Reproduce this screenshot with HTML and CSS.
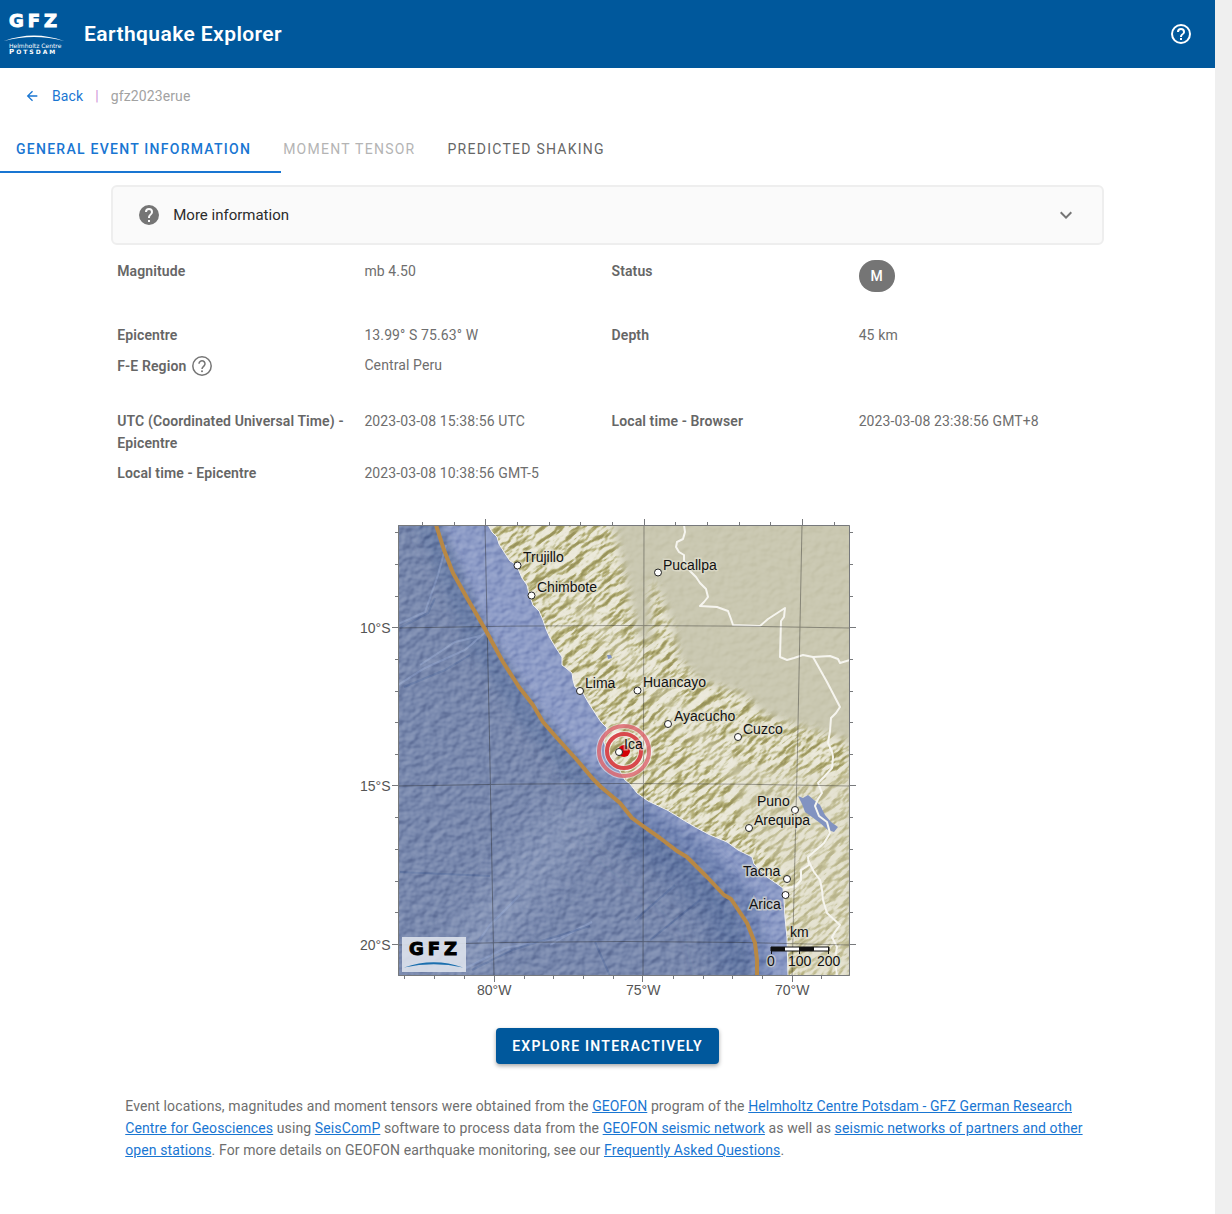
FILE: index.html
```html
<!DOCTYPE html>
<html lang="en">
<head>
<meta charset="utf-8">
<meta name="viewport" content="width=device-width, initial-scale=1">
<title>Earthquake Explorer</title>
<link rel="stylesheet" href="styles.css">
</head>
<body>
<div class="app">
  <header class="app-bar">
    <svg class="logo" viewBox="0 0 68 68" role="img" aria-label="GFZ Helmholtz Centre Potsdam">
      <text class="logo-name" x="9" y="27">GFZ</text>
      <path d="M4 41Q34 30 64 41Q34 33 4 41Z" fill="#fff"/>
      <text class="logo-centre" x="9" y="48">Helmholtz Centre</text>
      <text class="logo-city" x="9" y="54"><tspan class="logo-cap">P</tspan>OTSDAM</text>
    </svg>
    <h1 class="app-title">Earthquake Explorer</h1>
    <button class="icon-button" type="button" aria-label="Help">
      <svg class="icon" viewBox="0 0 24 24"><path d="M11 18h2v-2h-2v2zm1-16a10 10 0 1 0 0 20 10 10 0 0 0 0-20zm0 18a8 8 0 1 1 0-16 8 8 0 0 1 0 16zm0-14a4 4 0 0 0-4 4h2a2 2 0 1 1 4 0c0 2-3 1.750-3 5h2c0-2.250 3-2.500 3-5a4 4 0 0 0-4-4z"/></svg>
    </button>
  </header>

  <nav class="crumbs" aria-label="Breadcrumb">
    <a class="back" href="#">
      <svg class="back-icon" viewBox="0 0 24 24"><path d="M20 11v2H8l5.500 5.500-1.420 1.420L4.160 12l7.920-7.920L13.500 5.500 8 11h12z"/></svg>
      Back
    </a>
    <span class="divider">|</span>
    <span class="event-id">gfz2023erue</span>
  </nav>

  <div class="tabs" role="tablist">
    <button class="tab tab-active" type="button" role="tab" aria-selected="true">General event information</button>
    <button class="tab" type="button" role="tab" disabled>Moment tensor</button>
    <button class="tab" type="button" role="tab">Predicted shaking</button>
  </div>

  <main class="page">
    <div class="content">
      <button class="more-info" type="button" aria-expanded="false">
        <svg class="icon icon-grey" viewBox="0 0 24 24"><path d="M15.070 11.250l-.900.920C13.450 12.890 13 13.500 13 15h-2v-.500c0-1.110.450-2.110 1.170-2.830l1.240-1.260c.370-.360.590-.860.590-1.410a2 2 0 0 0-4 0H8a4 4 0 0 1 8 0c0 .880-.360 1.670-.930 2.250M13 19h-2v-2h2M12 2a10 10 0 1 0 0 20 10 10 0 0 0 0-20z"/></svg>
        <span class="more-label">More information</span>
        <svg class="chevron" viewBox="0 0 24 24"><path d="M7.410 8.580 12 13.170l4.590-4.590L18 10l-6 6-6-6 1.410-1.420z"/></svg>
      </button>

      <section class="details">
        <dl class="group">
          <dt>Magnitude</dt><dd>mb 4.50</dd>
          <dt>Status</dt><dd><span class="chip">M</span></dd>
        </dl>
        <dl class="group">
          <dt>Epicentre</dt><dd>13.99° S 75.63° W</dd>
          <dt>Depth</dt><dd>45 km</dd>
          <dt class="with-icon">F-E Region
            <svg class="icon icon-grey" viewBox="0 0 24 24"><circle cx="12" cy="12" r="9.200" fill="none" stroke="currentColor" stroke-width="1.500"/><path d="M9 9.800a3 3 0 1 1 5.100 2.100C13 13 12 13.300 12 15" fill="none" stroke="currentColor" stroke-width="1.500"/><circle cx="12" cy="17.200" r="1"/></svg>
          </dt><dd>Central Peru</dd>
        </dl>
        <dl class="group">
          <dt>UTC (Coordinated Universal Time) - Epicentre</dt><dd>2023-03-08 15:38:56 UTC</dd>
          <dt>Local time - Browser</dt><dd>2023-03-08 23:38:56 GMT+8</dd>
          <dt>Local time - Epicentre</dt><dd>2023-03-08 10:38:56 GMT-5</dd>
        </dl>
      </section>

      <svg class="map" viewBox="352 515 511 490" role="img" aria-label="Map of the epicentre near Ica, Peru">
        <defs>
          <clipPath id="frame"><path d="M398 525H850V976H398Z"/></clipPath>
          <path id="coast" d="M488 525L492 532L497 537L499 544L504 552L510 561L517 565L519 571L522 578L527 585L529 594L533 605L539 611L543 620L546 629L550 638L556 648L562 657L562 665L566 668L572 673L573 680L575 687L583 693L588 702L595 713L601 722L607 728L604 741L607 752L616 764L625 780L630 784L637 793L648 801L667 810L680 818L695 827L710 835L727 842L738 850L752 857L754 864L767 877L783 888L784 900L785 918L787 937L788 976"/>
          <path id="land-shape" d="M488 525L492 532L497 537L499 544L504 552L510 561L517 565L519 571L522 578L527 585L529 594L533 605L539 611L543 620L546 629L550 638L556 648L562 657L562 665L566 668L572 673L573 680L575 687L583 693L588 702L595 713L601 722L607 728L604 741L607 752L616 764L625 780L630 784L637 793L648 801L667 810L680 818L695 827L710 835L727 842L738 850L752 857L754 864L767 877L783 888L784 900L785 918L787 937L788 976H850V525Z"/>
          <clipPath id="land"><use href="#land-shape"/></clipPath>
          <filter id="soft" x="-20%" y="-20%" width="140%" height="140%"><feGaussianBlur stdDeviation="14"/></filter>
          <filter id="edge" x="-20%" y="-20%" width="140%" height="140%"><feGaussianBlur stdDeviation="5"/></filter>
          <filter id="mountains" x="0" y="0" width="100%" height="100%" color-interpolation-filters="sRGB">
            <feTurbulence type="fractalNoise" baseFrequency=".055 .14" numOctaves="4" seed="12"/>
            <feColorMatrix values="0 0 0 0 0 0 0 0 0 0 0 0 0 0 0 1.400 0 0 0 -.200"/>
            <feDiffuseLighting surfaceScale="5" lighting-color="#fff"><feDistantLight azimuth="265" elevation="48"/></feDiffuseLighting>
            <feComponentTransfer>
              <feFuncR type="table" tableValues=".600 .680 .730 .800 .890 .930"/>
              <feFuncG type="table" tableValues=".580 .660 .710 .790 .880 .920"/>
              <feFuncB type="table" tableValues=".360 .440 .510 .650 .790 .870"/>
            </feComponentTransfer>
          </filter>
          <filter id="seabed" x="0" y="0" width="100%" height="100%" color-interpolation-filters="sRGB">
            <feTurbulence type="fractalNoise" baseFrequency=".11 .13" numOctaves="2" seed="5"/>
            <feColorMatrix values="0 0 0 0 0 0 0 0 0 0 0 0 0 0 0 1 0 0 0 0"/>
            <feDiffuseLighting surfaceScale="2" lighting-color="#fff"><feDistantLight azimuth="225" elevation="34"/></feDiffuseLighting>
          </filter>
          <mask id="ranges">
            <path d="M470 500H605L618 545L628 590L638 635L652 645L650 580L656 585L672 625L680 660L700 680L745 695L765 715L850 742V1000H470Z" fill="#fff" filter="url(#edge)"/>
          </mask>
        </defs>

        <g clip-path="url(#frame)">
          <rect x="398" y="525" width="452" height="451" fill="#7585ab"/>
          <path d="M434 515L485 629L533 705L593 779L632 818L687 857L731 898L757 980H800V880L640 770L560 640L490 515Z" fill="#8a99c5" filter="url(#edge)"/>
          <path d="M424 515L478 640L530 718L590 790" fill="none" stroke="#667aa4" stroke-width="22" filter="url(#edge)"/>
          <path d="M590 785L632 830L680 865L725 910L742 985" fill="none" stroke="#5c719f" stroke-width="36" filter="url(#soft)"/>
          <path d="M640 815L700 850L745 895L764 975" fill="none" stroke="#6a7eae" stroke-width="12" filter="url(#edge)"/>
          <path d="M455 970L560 830L620 800" fill="none" stroke="#8c9bbd" stroke-width="45" opacity=".6" filter="url(#soft)"/>
          <g fill="none" stroke="#8fa1ca" stroke-width="2" opacity=".6">
            <path d="M398 685L425 668L465 650L488 630M398 624L425 612L438 575L446 545M420 665L455 642L480 636"/>
            <path d="M466 968L505 948L560 938L592 922M478 942L490 925L520 895M550 945L580 928"/>
          </g>
          <g fill="none" stroke="#4b6397" stroke-width="2" opacity=".45">
            <path d="M404 687L445 670L470 655M400 628L428 613L435 598M400 872L490 876M472 970L512 950L590 926M595 942L610 976M635 920L675 885M650 940L700 900"/>
          </g>
          <rect class="relief-sea" x="398" y="525" width="452" height="451" filter="url(#seabed)"/>

          <g clip-path="url(#land)">
            <rect x="398" y="525" width="452" height="451" fill="#c9c7b0"/>
            <rect class="relief-plain" x="398" y="525" width="452" height="451" filter="url(#seabed)"/>
            <g mask="url(#ranges)">
              <rect x="294" y="420" width="660" height="660" transform="rotate(-38 624 750)" filter="url(#mountains)"/>
              <path d="M735 765L850 775V976H800L790 880L740 820Z" fill="#dedbc8" opacity=".45" filter="url(#edge)"/>
              <path d="M575 600L650 680L740 780" fill="none" stroke="#e9e7da" stroke-width="20" opacity=".35" filter="url(#edge)"/>
            </g>
          </g>
          <use href="#coast" fill="none" stroke="#f1f1ee" stroke-width="1"/>
          <path d="M798 796L803 798L808 795L814 800L820 805L825 815L831 822L838 827L834 832L828 830L820 823L812 817L805 812L802 804Z" fill="#8293c1"/>
          <path d="M607 655L611 655L612 658L608 659Z" fill="#8293c1"/>

          <g fill="none" stroke="#f6f5ef" stroke-width="2" stroke-linejoin="round">
            <path d="M684 525L685 532L683 539L677 542L676 547L679 552L684 555L684 561L690 571L696 577L700 583L706 589L708 597L704 602L700 606L717 607L728 611L731 619L733 625L760 626L768 619L785 608L784 617L781 621L780 657L787 660L794 658L803 655L813 657L830 656L838 659L840 663L850 660"/>
            <path d="M813 657L827 682L840 707L836 713L831 718L830 731L828 743L832 752L833 757L832 768L824 777L818 783L822 793L818 799L815 806L819 816L827 822L830 833L824 843L816 850L808 857L809 865L801 870L801 880L796 886L784 889"/>
            <path d="M808 860L814 872L820 880L822 890L823 900L827 913L840 925L835 932L832 937L837 947L835 959L837 976"/>
          </g>
          <g class="grid-lines">
            <path d="M485 525Q490 750 494 976M644 525L643 976M802 525Q798 750 792 976"/>
            <path d="M398 628Q624 623 850 628M398 786Q624 781 850 786M398 945Q624 938 850 945"/>
          </g>
          <path d="M436 525L444 550L453 573L467 598L485 629L503 662L519 687L533 705L543 722L557 738L577 760L593 779L601 787L620 803L632 818L643 826L660 838L677 851L687 857L707 877L724 895L731 899L747 923L755 943L757 960L757 976" fill="none" stroke="#b88845" stroke-width="4" stroke-linejoin="round"/>
        </g>
        <path d="M398.500 525.500H849.500V975.500H398.500Z" fill="none" stroke="#77797c"/>
        <path class="ticks" d="M398 532.500h-3M398 564.500h-3M398 596.500h-3M398 627.500h-6M398 659.500h-3M398 691.500h-3M398 722.500h-3M398 754.500h-3M398 785.500h-6M398 817.500h-3M398 849.500h-3M398 881.500h-3M398 912.500h-3M398 944.500h-6M850 532.500h3M850 564.500h3M850 596.500h3M850 627.500h6M850 659.500h3M850 691.500h3M850 722.500h3M850 754.500h3M850 785.500h6M850 817.500h3M850 849.500h3M850 881.500h3M850 912.500h3M850 944.500h6"/>
        <path class="ticks" d="M422.500 525v-3M454.500 525v-3M485.500 525v-6M517.500 525v-3M549.500 525v-3M580.500 525v-3M612.500 525v-3M644.500 525v-6M675.500 525v-3M707.500 525v-3M739.500 525v-3M770.500 525v-3M802.500 525v-6M834.500 525v-3M404.500 976v3M434.500 976v3M464.500 976v3M494.500 976v6M524.500 976v3M553.500 976v3M583.500 976v3M613.500 976v3M642.500 976v6M673.500 976v3M703.500 976v3M732.500 976v3M762.500 976v3M792.500 976v6M821.500 976v3"/>

        <g fill="none">
          <circle cx="624" cy="751" r="25" stroke="#fff" stroke-width="6" opacity=".5"/>
          <circle cx="624" cy="751" r="25" stroke="#d8565f" stroke-width="4" opacity=".75"/>
          <circle cx="624" cy="751" r="17" stroke="#fff" stroke-width="6" opacity=".6"/>
          <circle cx="624" cy="751" r="17" stroke="#d8484c" stroke-width="4"/>
        </g>
        <circle cx="624" cy="751" r="6" fill="#d40006"/>

        <g class="city-dots">
          <circle cx="517.500" cy="565.500" r="3.500"/><circle cx="531.500" cy="595.500" r="3.500"/><circle cx="658" cy="572.500" r="3.500"/><circle cx="580" cy="691" r="3.500"/><circle cx="637.500" cy="690.500" r="3.500"/><circle cx="668" cy="724" r="3.500"/><circle cx="738" cy="737" r="3.500"/><circle cx="619" cy="752" r="3.500"/><circle cx="795" cy="810" r="3.500"/><circle cx="749" cy="828" r="3.500"/><circle cx="787" cy="879" r="3.500"/><circle cx="785.500" cy="895" r="3.500"/>
        </g>
        <g class="city-names">
          <text x="523" y="562">Trujillo</text><text x="537" y="592">Chimbote</text><text x="663" y="570">Pucallpa</text><text x="585" y="688">Lima</text><text x="643" y="687">Huancayo</text><text x="674" y="721">Ayacucho</text><text x="743" y="734">Cuzco</text><text x="624" y="749">Ica</text><text x="757" y="806">Puno</text><text x="754" y="825">Arequipa</text><text x="743" y="876">Tacna</text><text x="749" y="909">Arica</text><text x="790" y="937">km</text><text x="767" y="966">0</text><text x="788" y="966">100</text><text x="817" y="966">200</text>
        </g>
        <path d="M771 947H829V951H771Z" fill="#fff" stroke="#111"/>
        <path d="M771 947h14v4h-14zM800 947h14v4h-14z" fill="#111"/>
        <path d="M771.500 947v7M799.500 947v7M828.500 947v7" stroke="#111"/>

        <path d="M402 937H466V972H402Z" fill="#dde2ec" opacity=".9"/>
        <text class="map-logo" x="409" y="955">GFZ</text>
        <path d="M404 967.500Q434 957 463 967.500Q434 961 404 967.500Z" fill="#1b6fae"/>

        <g class="axis-labels">
          <text x="360" y="633">10°S</text><text x="360" y="791">15°S</text><text x="360" y="950">20°S</text>
          <text x="477" y="995">80°W</text><text x="626" y="995">75°W</text><text x="775" y="995">70°W</text>
        </g>
      </svg>

      <button class="explore" type="button">Explore interactively</button>

      <p class="credits">Event locations, magnitudes and moment tensors were obtained from the <a href="#">GEOFON</a> program of the <a href="#">Helmholtz Centre Potsdam - GFZ German Research Centre for Geosciences</a> using <a href="#">SeisComP</a> software to process data from the <a href="#">GEOFON seismic network</a> as well as <a href="#">seismic networks of partners and other open stations</a>. For more details on GEOFON earthquake monitoring, see our <a href="#">Frequently Asked Questions</a>.</p>
    </div>
  </main>
</div>
</body>
</html>
```

FILE: styles.css
```css
* {
  box-sizing: border-box;
}

body {
  margin: 0;
  padding-right: 17px;
  background: #efefef;
  color: #6e6e6e;
  font-family: Roboto, "Liberation Sans", sans-serif;
  font-size: 14px;
  line-height: 22px;
  letter-spacing: 0.008em;
}

button {
  font: inherit;
  letter-spacing: inherit;
  border: 0;
  background: none;
  cursor: pointer;
}

a {
  color: #1976d2;
}

.app {
  min-height: 100vh;
  background: #fff;
}

.app-bar {
  display: flex;
  align-items: center;
  height: 68px;
  padding-right: 16px;
  background: #00589c;
  color: #fff;
}

.logo {
  flex: none;
  width: 68px;
  height: 68px;
  fill: #fff;
  font-family: "DejaVu Sans", sans-serif;
  letter-spacing: 0;
}

.logo-name {
  font-size: 18px;
  font-weight: 700;
  letter-spacing: 4px;
  stroke: #fff;
}

.logo-centre {
  font-size: 6px;
}

.logo-city {
  font-size: 6px;
  font-weight: 700;
  letter-spacing: 2px;
}

.logo-cap {
  font-size: 7px;
}

.app-title {
  flex: 1;
  margin: 0 0 0 16px;
  font-size: 21px;
  line-height: 32px;
  font-weight: 600;
  letter-spacing: 0.02em;
}

.icon-button {
  display: flex;
  padding: 6px;
  color: inherit;
}

.icon {
  flex: none;
  width: 24px;
  height: 24px;
  fill: currentColor;
}

.crumbs {
  display: flex;
  align-items: center;
  gap: 12px;
  padding: 17px 24px 18px;
}

.back {
  display: flex;
  align-items: center;
  gap: 12px;
  text-decoration: none;
}

.back-icon {
  width: 16px;
  height: 16px;
  fill: currentColor;
}

.divider {
  color: #ce93d8;
}

.event-id {
  color: #a2a2a2;
}

.tabs {
  display: flex;
  height: 48px;
}

.tab {
  padding: 0 16px;
  color: #666;
  font-weight: 400;
  letter-spacing: 0.09em;
  text-transform: uppercase;
}

.tab:disabled {
  color: #b4b4b4;
}

.tab-active {
  position: relative;
  color: #1976d2;
  font-weight: 500;
}

.tab-active::after {
  content: "";
  position: absolute;
  right: -14px;
  bottom: 0;
  left: 0;
  height: 2px;
  background: #1976d2;
}

.page {
  display: grid;
  grid-template-columns: 1fr 10fr 1fr;
  padding: 12px;
}

.content {
  grid-column: 2;
  display: flex;
  flex-direction: column;
}

.more-info {
  display: flex;
  align-items: center;
  gap: 12px;
  padding: 16px 24px;
  border: 2px solid #eee;
  border-radius: 6px;
  background: #fafafa;
  color: #2c2c2c;
}

.more-label {
  flex: 1;
  font-size: 15px;
  letter-spacing: 0;
  line-height: 24px;
  text-align: left;
}

.icon-grey {
  color: #757575;
}

.chevron {
  width: 24px;
  height: 24px;
  fill: #757575;
}

.details {
  display: flex;
  flex-direction: column;
  gap: 24px;
  margin: 11px -2px 0 6px;
}

.group {
  display: grid;
  grid-template-columns: repeat(4, 1fr);
  margin: 0;
}

.group dt,
.group dd {
  margin: 0;
  padding: 4px 0;
}

.group dt {
  color: #666;
  font-weight: 600;
}

.with-icon {
  display: flex;
  align-items: center;
  gap: 4px;
}

.chip {
  display: flex;
  align-items: center;
  justify-content: center;
  width: 36px;
  height: 32px;
  border-radius: 16px;
  background: #757575;
  color: #fff;
  font-weight: 500;
}

.map {
  align-self: center;
  width: 511px;
  max-width: 100%;
  margin-top: 27px;
  font-family: "Liberation Sans", sans-serif;
  font-size: 14px;
  letter-spacing: 0;
}

.relief-sea {
  mix-blend-mode: soft-light;
  opacity: 0.5;
}

.relief-plain {
  mix-blend-mode: soft-light;
  opacity: 0.2;
}

.grid-lines {
  fill: none;
  stroke: #222;
  opacity: 0.4;
}

.ticks {
  stroke: #77797c;
}

.city-dots {
  fill: #fff;
  stroke: #222;
}

.city-names {
  fill: #111;
  stroke: #e4e2d3;
  stroke-opacity: 0.6;
  stroke-width: 3px;
  paint-order: stroke;
}

.map-logo {
  fill: #000;
  font-family: "DejaVu Sans", sans-serif;
  font-size: 18px;
  font-weight: 700;
  letter-spacing: 4px;
  stroke: #000;
}

.axis-labels {
  fill: #555;
}

.explore {
  align-self: center;
  height: 36px;
  margin-top: 23px;
  padding: 0 16px;
  border-radius: 4px;
  background: #00589c;
  color: #fff;
  font-weight: 600;
  letter-spacing: 0.09em;
  text-transform: uppercase;
  box-shadow: 0 2px 4px rgba(0, 0, 0, 0.35);
}

.credits {
  margin: 31px 14px;
}
```
